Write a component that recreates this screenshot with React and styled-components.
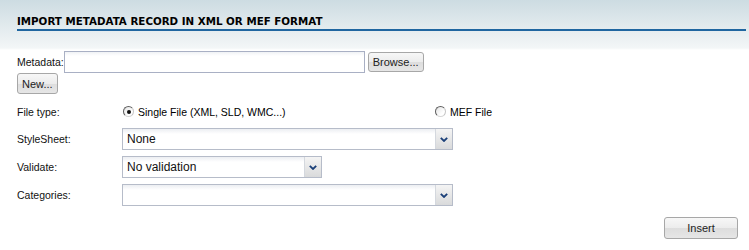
import React from "react";
import styled, { createGlobalStyle } from "styled-components";

const GlobalStyle = createGlobalStyle`
  body {
    margin: 0;
    background: #fff;
    font-family: "Liberation Sans", Arial, sans-serif;
    font-size: 10.5px;
    color: #000;
  }
`;

const Page = styled.div`
  width: 749px;
  height: 250px;
  background: linear-gradient(to bottom, #cddce2 0px, #f3f6f7 48px, #fff 50px, #fff 100%);
`;

const Header = styled.div`
  padding: 15px 3px 0 17px;
  height: 34px;
  box-sizing: border-box;
`;

const Title = styled.h1`
  margin: 0;
  font-family: "DejaVu Sans", Verdana, sans-serif;
  font-weight: bold;
  font-size: 10.3px;
  line-height: 13px;
  padding-bottom: 1px;
  border-bottom: 2px solid #1f66a0;
  height: 13px;
`;

const Body = styled.div`
  padding: 17px 0 0 17px;
`;

const FileRow = styled.div`
  display: flex;
  align-items: center;
  height: 22px;
`;

const Label = styled.span`
  width: ${(p) => (p.$w ? `${p.$w}px` : "auto")};
  flex-shrink: 0;
  color: #111;
`;

const TextInput = styled.div`
  width: 299px;
  height: 20px;
  border: 1px solid #a9b0c4;
  background: linear-gradient(to bottom, #f0f2f5 0px, #fff 4px);
  margin-right: 3px;
`;

const Button = styled.button`
  font-family: "Liberation Sans", Arial, sans-serif;
  font-size: 11px;
  color: #222;
  height: ${(p) => p.$h || 21}px;
  padding: 0 ${(p) => p.$pad || 4}px;
  width: ${(p) => (p.$w ? `${p.$w}px` : "auto")};
  border: 1px solid #a7a7a7;
  border-radius: 3px;
  background: linear-gradient(to bottom, #f7f7f7 0%, #ececec 50%, #dddddd 51%, #e6e6e6 100%);
  cursor: pointer;
`;

const NewRow = styled.div`
  height: 21px;
  margin-bottom: 4px;
`;

const FieldRow = styled.div`
  display: flex;
  align-items: center;
  height: ${(p) => p.$h || 28}px;
`;

const RadioGroup = styled.div`
  display: flex;
  align-items: center;
  width: ${(p) => p.$w}px;
  gap: 4px;
`;

const Radio = styled.span`
  width: 9px;
  height: 9px;
  border-radius: 50%;
  border: 1px solid #5e5e5e;
  border-right-color: #c4c4c4;
  border-bottom-color: #d6d6d6;
  background: linear-gradient(135deg, #e4e4e4 0%, #fff 70%);
  display: inline-flex;
  align-items: center;
  justify-content: center;
  &::after {
    content: "";
    width: 4px;
    height: 4px;
    border-radius: 50%;
    background: ${(p) => (p.$checked ? "#111" : "transparent")};
  }
`;

const Select = styled.div`
  width: ${(p) => p.$w}px;
  height: 20px;
  border: 1px solid #b6bcc9;
  display: flex;
  background: linear-gradient(to bottom, #eceef2 0px, #fff 5px);
`;

const SelectText = styled.span`
  flex: 1;
  font-family: "Liberation Sans", Arial, sans-serif;
  font-size: 12px;
  line-height: 21px;
  padding-left: 4px;
  color: #111;
`;

const SelectArrow = styled.span`
  width: 16px;
  display: flex;
  align-items: center;
  justify-content: center;
  border-left: 1px solid #d4d8de;
  background: linear-gradient(to bottom, #f4f4f4 0%, #d9dadb 100%);
`;

const Footer = styled.div`
  display: flex;
  justify-content: flex-end;
  padding: 8px 11px 0 0;
`;

function Chevron() {
  return (
    <svg width="8" height="5" viewBox="0 0 8 5">
      <path d="M0.8 0.8 L4 4 L7.2 0.8" fill="none" stroke="#1a3f78" strokeWidth="1.8" />
    </svg>
  );
}

function Dropdown({ width, value }) {
  return (
    <Select $w={width}>
      <SelectText>{value}</SelectText>
      <SelectArrow>
        <Chevron />
      </SelectArrow>
    </Select>
  );
}

export default function App() {
  return (
    <Page>
      <GlobalStyle />
      <Header>
        <Title>IMPORT METADATA RECORD IN XML OR MEF FORMAT</Title>
      </Header>
      <Body>
        <FileRow>
          <Label>Metadata:</Label>
          <TextInput />
          <Button $h={20}>Browse...</Button>
        </FileRow>
        <NewRow>
          <Button>New...</Button>
        </NewRow>
        <FieldRow $h={27}>
          <Label $w={106}>File type:</Label>
          <RadioGroup $w={312}>
            <Radio $checked />
            <span>Single File (XML, SLD, WMC...)</span>
          </RadioGroup>
          <RadioGroup $w={100}>
            <Radio />
            <span>MEF File</span>
          </RadioGroup>
        </FieldRow>
        <FieldRow>
          <Label $w={105}>StyleSheet:</Label>
          <Dropdown width={329} value="None" />
        </FieldRow>
        <FieldRow>
          <Label $w={105}>Validate:</Label>
          <Dropdown width={198} value="No validation" />
        </FieldRow>
        <FieldRow>
          <Label $w={105}>Categories:</Label>
          <Dropdown width={329} value="" />
        </FieldRow>
        <Footer>
          <Button $w={74} $h={22}>Insert</Button>
        </Footer>
      </Body>
    </Page>
  );
}
